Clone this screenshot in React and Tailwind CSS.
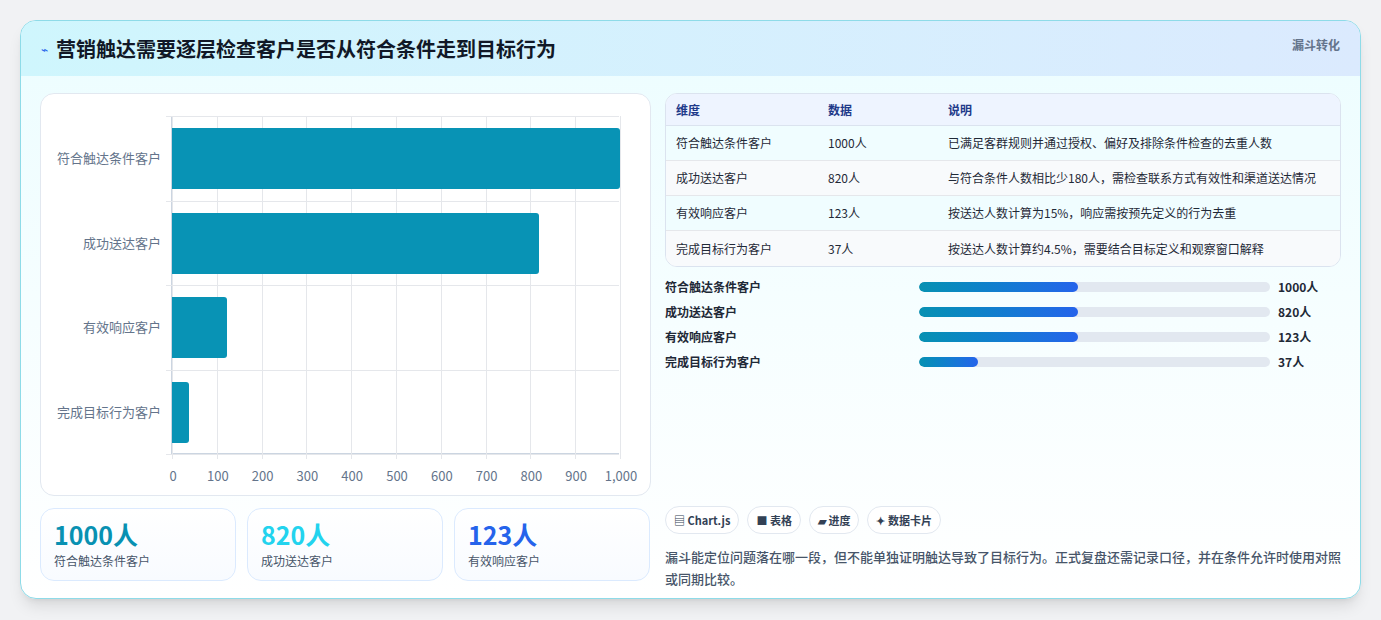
export default function App() {
  const f = { fontFamily: '"Noto Sans CJK SC","Noto Sans",sans-serif' };
  const bars = [["符合触达条件客户", 1000], ["成功送达客户", 820], ["有效响应客户", 123], ["完成目标行为客户", 37]];
  const rows = [
    ["符合触达条件客户", "1000人", "已满足客群规则并通过授权、偏好及排除条件检查的去重人数"],
    ["成功送达客户", "820人", "与符合条件人数相比少180人，需检查联系方式有效性和渠道送达情况"],
    ["有效响应客户", "123人", "按送达人数计算为15%，响应需按预先定义的行为去重"],
    ["完成目标行为客户", "37人", "按送达人数计算约4.5%，需要结合目标定义和观察窗口解释"],
  ];
  const prog = [["符合触达条件客户", "1000人", 159], ["成功送达客户", "820人", 159], ["有效响应客户", "123人", 159], ["完成目标行为客户", "37人", 59]];
  const ticks = ["0", "100", "200", "300", "400", "500", "600", "700", "800", "900", "1,000"];
  return (
    <div style={f} className="w-[1381px] h-[620px] bg-[#f1f2f4] pt-[20px] pl-[20px]">
      <div className="w-[1341px] h-[579px] rounded-[16px] border border-[#8edbe8] overflow-hidden bg-gradient-to-b from-[#ecfdff] to-white shadow-lg flex flex-col">
        <div className="h-[55px] shrink-0 bg-gradient-to-r from-[#cff6fd] to-[#dbeafe] flex items-start justify-between px-[20px]">
          <div className="flex items-center gap-[8px] h-[55px]">
            <span className="text-[#2563eb] text-[12px]">⌁</span>
            <span className="text-[20px] font-bold text-[#111827]">营销触达需要逐层检查客户是否从符合条件走到目标行为</span>
          </div>
          <span className="text-[12px] font-bold text-[#64748b] mt-[15px]">漏斗转化</span>
        </div>
        <div className="flex gap-[14px] px-[19px] pt-[17px]">
          <div className="w-[611px] flex flex-col gap-[12px]">
            <div className="h-[403px] rounded-[14px] border border-[#e2e8f0] bg-white relative">
              <div className="absolute left-[130px] top-[22px] w-[448px] h-[338px] border-l border-b border-[#cbd5e1]">
                {ticks.map((t, i) => (
                  <div key={t} className="absolute top-0 bottom-[-6px] border-l border-[#e5e7eb]" style={{ left: i * 44.8 }}>
                    <span className="absolute top-[350px] -translate-x-1/2 text-[13px] text-[#64748b]">{t}</span>
                  </div>
                ))}
                {[0, 1, 2, 3, 4].map(i => (
                  <div key={i} className="absolute left-[-6px] right-0 border-t border-[#e5e7eb]" style={{ top: i * 84.5 }} />
                ))}
                {bars.map(([n, v], i) => (
                  <div key={n}>
                    <div className="absolute left-0 h-[61px] bg-[#0893b5] rounded-r-[3px]" style={{ top: i * 84.5 + 12, width: v * 0.448 }} />
                    <span className="absolute right-[458px] whitespace-nowrap text-[13px] text-[#64748b]" style={{ top: i * 84.5 + 32 }}>{n}</span>
                  </div>
                ))}
              </div>
            </div>
            <div className="flex gap-[11px]">
              {[["1000人", "text-[#0891b2]", "符合触达条件客户"], ["820人", "text-[#22d3ee]", "成功送达客户"], ["123人", "text-[#2563eb]", "有效响应客户"]].map(([a, c, b]) => (
                <div key={a} className="w-[196px] h-[73px] rounded-[14px] border border-[#dbeafe] bg-gradient-to-b from-white to-[#f8fbff] px-[13px] pt-[9px]">
                  <div className={"text-[25px] font-bold leading-[32px] " + c}>{a}</div>
                  <div className="text-[12px] text-[#475569] mt-[2px]">{b}</div>
                </div>
              ))}
            </div>
          </div>
          <div className="w-[676px] flex flex-col">
            <div className="rounded-[12px] border border-[#dbe3ef] overflow-hidden bg-white text-[12px]">
              <div className="flex h-[32px] items-center bg-[#eef4ff] text-[#1e3a8a] font-bold border-b border-[#dbe3ef]">
                <span className="w-[162px] pl-[10px]">维度</span><span className="w-[120px]">数据</span><span>说明</span>
              </div>
              {rows.map((r, i) => (
                <div key={i} className={"flex h-[35px] items-center text-[#1f2937] " + (i % 2 ? "bg-[#f8fafc]" : "bg-[#f0fdff]") + (i < 3 ? " border-b border-[#e5e7eb]" : "")}>
                  <span className="w-[162px] pl-[10px]">{r[0]}</span><span className="w-[120px]">{r[1]}</span><span>{r[2]}</span>
                </div>
              ))}
            </div>
            <div className="mt-[12px] flex flex-col gap-[9px]">
              {prog.map(([n, v, w]) => (
                <div key={n} className="flex items-center h-[16px] text-[12px] font-bold text-[#1f2937]">
                  <span className="w-[254px]">{n}</span>
                  <div className="w-[351px] h-[10px] rounded-full bg-[#e2e8f0] overflow-hidden">
                    <div className="h-full rounded-full bg-gradient-to-r from-[#0891b2] to-[#2563eb]" style={{ width: w }} />
                  </div>
                  <span className="ml-[8px]">{v}</span>
                </div>
              ))}
            </div>
            <div className="flex gap-[8px] mt-[136px]">
              {["▤ Chart.js", "■ 表格", "▰ 进度", "✦ 数据卡片"].map(t => (
                <span key={t} className="h-[28px] px-[8px] rounded-full border border-[#e2e8f0] bg-white text-[11px] font-bold text-[#334155] flex items-center">{t}</span>
              ))}
            </div>
            <p className="mt-[12px] text-[13px] leading-[22px] text-[#475569] font-medium">漏斗能定位问题落在哪一段，但不能单独证明触达导致了目标行为。正式复盘还需记录口径，并在条件允许时使用对照或同期比较。</p>
          </div>
        </div>
      </div>
    </div>
  );
}
